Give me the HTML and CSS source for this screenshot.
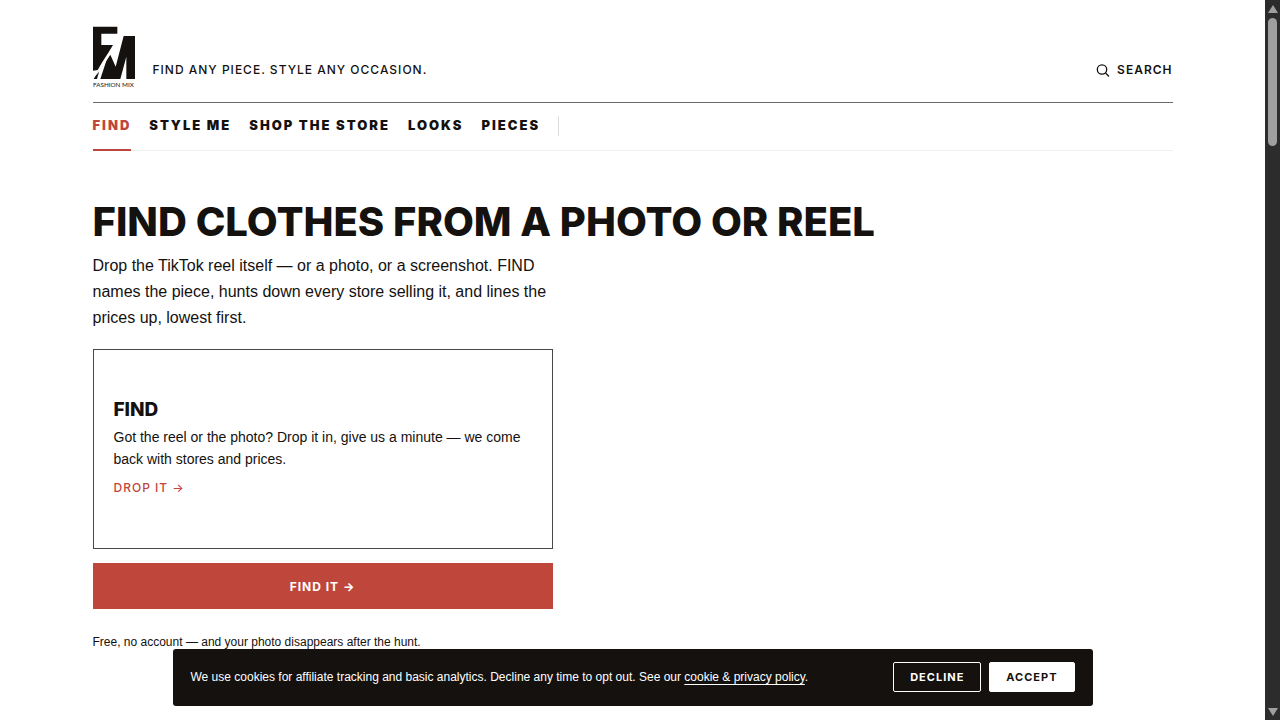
FILE: index.html
```html
<!DOCTYPE html>
<html lang="en">
<head>
  <meta charset="UTF-8">
  <meta name="viewport" content="width=device-width, initial-scale=1.0">
  <title>Fashion Mix</title>
  <link rel="stylesheet" href="styles.css">
</head>
<body>
  <div class="page">
    <div class="wrap">
      <!-- Masthead -->
      <header class="masthead">
        <a class="logo" href="#" aria-label="Fashion Mix">
          <svg width="42" height="62" viewBox="0 0 126 186">
            <!-- F -->
            <path d="M0 2H73V23H25V57H60L46 80L28 108L14 132L0 134Z"/>
            <!-- M -->
            <path d="M92 30H126V159H100V92L82 159H22L40 104L52 86L68 122Z"/>
            <path d="M2 159L22 124L12 159Z"/>
            <!-- cut between the letters -->
            <path class="slash" d="M74 44L40 92L2 156L26 128L46 94Z"/>
            <text x="0" y="182">FASHION MIX</text>
          </svg>
        </a>
        <p class="tagline">Find any piece. Style any occasion.</p>
        <a class="search" href="#">
          <svg width="14" height="14" viewBox="0 0 14 14">
            <circle cx="6" cy="6.5" r="4.7"/>
            <path d="M9.5 10L13 13.5"/>
          </svg>
          Search
        </a>
      </header>

      <nav class="nav">
        <a class="active" href="#">Find</a>
        <a href="#">Style me</a>
        <a href="#">Shop the store</a>
        <a href="#">Looks</a>
        <a href="#">Pieces</a>
        <span class="divider"></span>
      </nav>

      <main class="hero">
        <h1>Find clothes from a photo or reel</h1>
        <p class="lead">Drop the TikTok reel itself — or a photo, or a screenshot. FIND names the piece, hunts down every store selling it, and lines the prices up, lowest first.</p>
        <a class="drop" href="#">
          <h2>Find</h2>
          <p>Got the reel or the photo? Drop it in, give us a minute — we come back with stores and prices.</p>
          <span class="drop-link">Drop it →</span>
        </a>
        <button class="find-btn" type="button">Find it →</button>
        <p class="note">Free, no account — and your photo disappears after the hunt.</p>
      </main>
    </div>

    <!-- Cookie notice -->
    <div class="cookies">
      <p>We use cookies for affiliate tracking and basic analytics. Decline any time to opt out. See our <a href="#">cookie &amp; privacy policy</a>.</p>
      <button type="button">Decline</button>
      <button class="accept" type="button">Accept</button>
    </div>
  </div>

  <div class="scrollbar">
    <span class="arrow-up"></span>
    <span class="thumb"></span>
    <span class="arrow-down"></span>
  </div>
</body>
</html>
```
FILE: styles.css
```css
* {
  margin: 0;
  padding: 0;
  box-sizing: border-box;
}
body {
  display: flex;
  min-height: 100vh;
  font-family: "Liberation Sans", Arial, sans-serif;
  background: #fff;
  color: #14110f;
}
a {
  color: inherit;
  text-decoration: none;
}
.page {
  flex: 1;
  min-width: 0;
}
.wrap {
  max-width: 1120px;
  margin: 0 auto;
  padding: 0 20px;
}

/* Masthead */
.masthead {
  display: flex;
  align-items: flex-end;
  gap: 18px;
  padding: 26px 0 14px;
  border-bottom: 1px solid #6b6a69;
}
.logo svg {
  display: block;
  fill: #14110f;
}
.logo .slash {
  fill: #fff;
}
.logo text {
  font-family: Lato, sans-serif;
  font-size: 19px;
}
.tagline,
.search {
  font-family: Inter, sans-serif;
  font-size: 12px;
  line-height: 16px;
  font-weight: 600;
  letter-spacing: 1px;
  text-transform: uppercase;
  margin-bottom: 10px;
}
.tagline {
  font-weight: 500;
}
.search {
  display: flex;
  align-items: center;
  gap: 7px;
  margin-left: auto;
}
.search svg {
  fill: none;
  stroke: #14110f;
  stroke-width: 1.3;
}

/* Main navigation */
.nav {
  display: flex;
  gap: 18px;
  border-bottom: 1px solid #efefef;
}
.nav a {
  padding: 13px 0 15px;
  margin-bottom: -1px;
  border-bottom: 2px solid transparent;
  font-family: Inter, sans-serif;
  font-size: 13px;
  line-height: 18px;
  font-weight: 900;
  letter-spacing: 2px;
  text-transform: uppercase;
}
.nav .active {
  color: #bf463b;
  border-color: #bf463b;
}
.divider {
  width: 1px;
  height: 20px;
  margin-top: 13px;
  background: #dcdcdc;
}

/* Hero */
.hero {
  padding-top: 50px;
}
h1 {
  font-family: Inter, sans-serif;
  font-size: 40px;
  line-height: 42px;
  font-weight: 800;
  text-transform: uppercase;
}
.lead {
  max-width: 480px;
  margin-top: 10px;
  font-size: 16px;
  line-height: 26px;
}
.drop {
  display: flex;
  flex-direction: column;
  justify-content: center;
  max-width: 460px;
  min-height: 200px;
  margin-top: 18px;
  padding: 20px 20px 24px;
  border: 1px solid #4a4846;
}
h2 {
  font-family: Inter, sans-serif;
  font-size: 19px;
  line-height: 22px;
  font-weight: 800;
  text-transform: uppercase;
}
.drop p {
  margin-top: 5px;
  font-size: 14px;
  line-height: 22px;
}
.drop-link {
  margin-top: 10px;
  font-family: Inter, sans-serif;
  font-size: 12px;
  line-height: 16px;
  font-weight: 500;
  letter-spacing: 1px;
  text-transform: uppercase;
  color: #bf463b;
}
.find-btn {
  display: block;
  width: 100%;
  max-width: 460px;
  height: 46px;
  margin-top: 14px;
  border: none;
  background: #bf463b;
  color: #fff;
  font-family: Inter, sans-serif;
  font-size: 12px;
  font-weight: 700;
  letter-spacing: 1px;
  text-transform: uppercase;
  cursor: pointer;
}
.note {
  margin-top: 24px;
  font-size: 12px;
  line-height: 18px;
}

/* Cookie notice, floats over the page */
.cookies {
  position: fixed;
  left: 0;
  right: 15px;
  bottom: 14px;
  display: flex;
  align-items: center;
  gap: 8px;
  max-width: 920px;
  margin: 0 auto;
  padding: 13px 18px 14px;
  border-radius: 3px;
  background: #14110f;
  color: #fff;
}
.cookies p {
  flex: 1;
  font-size: 12px;
  line-height: 18px;
}
.cookies p a {
  text-decoration: underline;
  text-underline-offset: 3px;
}
.cookies button {
  height: 30px;
  padding: 0 16px;
  border: 1px solid #fff;
  border-radius: 2px;
  background: none;
  color: #fff;
  font-family: Inter, sans-serif;
  font-size: 11px;
  font-weight: 700;
  letter-spacing: 1px;
  text-transform: uppercase;
  cursor: pointer;
}
.cookies .accept {
  background: #fff;
  color: #14110f;
}

/* Scrollbar */
.scrollbar {
  position: sticky;
  top: 0;
  display: flex;
  flex-direction: column;
  align-items: center;
  width: 15px;
  height: 100vh;
  padding: 5px 0 4px;
  background: #2c2c2c;
}
.arrow-up,
.arrow-down {
  border: 5px solid transparent;
}
.arrow-up {
  border-top: none;
  border-bottom: 8px solid #9f9f9f;
}
.arrow-down {
  margin-top: auto;
  border-bottom: none;
  border-top: 8px solid #9f9f9f;
}
.thumb {
  width: 9px;
  height: 18%;
  margin-top: 5px;
  border-radius: 5px;
  background: #9f9f9f;
}
```
